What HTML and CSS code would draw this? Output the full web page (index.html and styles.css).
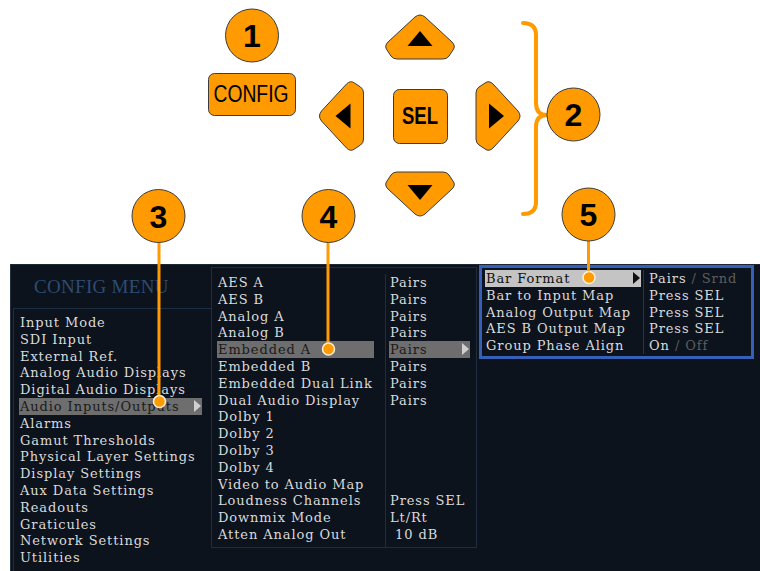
FILE: index.html
```html
<!DOCTYPE html>
<html lang="en">
<head>
    <meta charset="UTF-8">
    <meta name="viewport" content="width=device-width, initial-scale=1.0">
    <title>Config Menu - Audio Inputs/Outputs</title>
    <link rel="stylesheet" href="styles.css">
</head>
<body>

    <!-- front panel keys -->
    <div class="keypad">
        <svg width="760" height="264" viewBox="0 0 760 264">
            <defs>
                <path id="arrowKey" d="M-5,-20 Q0,-24 5,-20 L32,5 Q36,9 33,13 L29,19 Q27,22 23,22 L-23,22 Q-27,22 -29,19 L-33,13 Q-36,9 -32,5 Z"/>
                <path id="arrowMark" d="M0,-6 L12.5,9 L-12.5,9 Z"/>
            </defs>

            <rect class="key" x="208.5" y="73.5" width="87" height="42" rx="6"/>
            <text class="key-text" x="251" y="102" textLength="75" lengthAdjust="spacingAndGlyphs">CONFIG</text>

            <g transform="translate(420 37)"><use class="key" href="#arrowKey"/><use class="mark" href="#arrowMark"/></g>
            <g transform="translate(420 194) rotate(180)"><use class="key" href="#arrowKey"/><use class="mark" href="#arrowMark"/></g>
            <g transform="translate(341.5 116) rotate(-90)"><use class="key" href="#arrowKey"/><use class="mark" href="#arrowMark"/></g>
            <g transform="translate(498 116) rotate(90)"><use class="key" href="#arrowKey"/><use class="mark" href="#arrowMark"/></g>

            <rect class="key" x="393.5" y="89.5" width="54" height="54" rx="6"/>
            <text class="key-text bold" x="420" y="124" textLength="36" lengthAdjust="spacingAndGlyphs">SEL</text>

            <path class="brace" d="M523,23 Q536,23 536,35 L536,103 Q536,115 547,115 Q536,115 536,127 L536,202 Q536,214 523,214"/>
        </svg>
    </div>

    <!-- instrument screen -->
    <div class="screen">
        <div class="nav">
            <div class="nav-title">CONFIG MENU</div>
            <ul class="nav-list">
                <li>Input Mode</li>
                <li>SDI Input</li>
                <li>External Ref.</li>
                <li>Analog Audio Displays</li>
                <li>Digital Audio Displays</li>
                <li class="active">Audio Inputs/Outputs</li>
                <li>Alarms</li>
                <li>Gamut Thresholds</li>
                <li>Physical Layer Settings</li>
                <li>Display Settings</li>
                <li>Aux Data Settings</li>
                <li>Readouts</li>
                <li>Graticules</li>
                <li>Network Settings</li>
                <li>Utilities</li>
            </ul>
        </div>

        <div class="submenu">
            <ul class="labels">
                <li>AES A</li>
                <li>AES B</li>
                <li>Analog A</li>
                <li>Analog B</li>
                <li class="active">Embedded A</li>
                <li>Embedded B</li>
                <li>Embedded Dual Link</li>
                <li>Dual Audio Display</li>
                <li>Dolby 1</li>
                <li>Dolby 2</li>
                <li>Dolby 3</li>
                <li>Dolby 4</li>
                <li>Video to Audio Map</li>
                <li>Loudness Channels</li>
                <li>Downmix Mode</li>
                <li>Atten Analog Out</li>
            </ul>
            <ul class="values">
                <li>Pairs</li>
                <li>Pairs</li>
                <li>Pairs</li>
                <li>Pairs</li>
                <li class="active">Pairs</li>
                <li>Pairs</li>
                <li>Pairs</li>
                <li>Pairs</li>
                <li></li>
                <li></li>
                <li></li>
                <li></li>
                <li></li>
                <li>Press SEL</li>
                <li>Lt/Rt</li>
                <li>&nbsp;10 dB</li>
            </ul>
        </div>

        <div class="detail">
            <ul class="labels">
                <li class="active">Bar Format</li>
                <li>Bar to Input Map</li>
                <li>Analog Output Map</li>
                <li>AES B Output Map</li>
                <li>Group Phase Align</li>
            </ul>
            <ul class="values">
                <li>Pairs <span class="dim">/ Srnd</span></li>
                <li>Press SEL</li>
                <li>Press SEL</li>
                <li>Press SEL</li>
                <li>On <span class="dim">/ Off</span></li>
            </ul>
        </div>
    </div>

    <!-- numbered callouts -->
    <svg class="callouts" width="760" height="571" viewBox="0 0 760 571">
        <line class="lead" x1="159" y1="242" x2="159" y2="402"/>
        <line class="lead" x1="328" y1="242" x2="328" y2="349"/>
        <line class="lead" x1="588.5" y1="241" x2="588.5" y2="277"/>
        <circle class="dot" cx="159.5" cy="401.5" r="6"/>
        <circle class="dot" cx="328.5" cy="349" r="6"/>
        <circle class="dot" cx="589" cy="277.5" r="6"/>

        <circle class="badge" cx="252" cy="35.5" r="26.5"/>
        <text class="badge-num" x="252" y="47">1</text>
        <circle class="badge" cx="573.5" cy="114.5" r="26.5"/>
        <text class="badge-num" x="573.5" y="126">2</text>
        <circle class="badge" cx="158.5" cy="216" r="26.5"/>
        <text class="badge-num" x="158.5" y="227.5">3</text>
        <circle class="badge" cx="328.5" cy="216" r="26.5"/>
        <text class="badge-num" x="328.5" y="227.5">4</text>
        <circle class="badge" cx="588.5" cy="214.5" r="26.5"/>
        <text class="badge-num" x="588.5" y="226">5</text>
    </svg>

</body>
</html>
```

FILE: styles.css
```css
body { margin: 0; width: 760px; height: 571px; position: relative; overflow: hidden; background-color: #fff; font-family: "DejaVu Serif", serif; }
ul { list-style: none; margin: 0; padding: 0; }

/* keys */
.keypad { height: 264px; }
.keypad svg { display: block; }
.key { fill: #ff9a00; stroke: #3c3c3c; stroke-width: 1; }
.mark { fill: #000; }
.key-text { font-family: "Liberation Sans", Arial, sans-serif; font-size: 23px; fill: #000; text-anchor: middle; }
.key-text.bold { font-weight: bold; }
.brace { fill: none; stroke: #ff9a00; stroke-width: 4; stroke-linecap: round; }

/* screen */
.screen { display: flex; align-items: flex-start; height: 307px; margin-left: 10px; box-sizing: border-box; background-color: #0c131d; border-top: 1px solid #1c2734; border-left: 1px solid #243140; font-size: 13px; line-height: 17px; letter-spacing: 0.9px; color: #dadada; }
.screen li { position: relative; white-space: nowrap; height: 16.8px; }
.screen li.active { background-color: #6e6e6e; color: #1a1a1a; }
.nav-list li.active::after, .values li.active::after, .detail .labels li.active::after { content: ""; position: absolute; right: 1px; top: 2px; border-left: 7px solid #d0d0d0; border-top: 6px solid transparent; border-bottom: 6px solid transparent; }

.nav { width: 200px; flex: none; }
.nav-title { height: 43px; line-height: 43px; padding-left: 23px; font-family: "Liberation Serif", serif; font-size: 19px; letter-spacing: 0.3px; color: #2d4c72; }
.nav-list { margin-left: 2px; padding: 5px 9px 0 5px; border-top: 1px solid #1d2d42; border-left: 1px solid #1d2d42; height: 258px; }
.nav-list li { padding-left: 1px; }

.submenu { display: flex; flex: none; width: 266px; height: 281px; margin-top: 2px; box-sizing: border-box; padding: 6px 0 0 5px; border: 1px solid #1d2d42; }
.submenu .labels { width: 157px; }
.submenu .labels li { padding-left: 1px; }
.submenu .values { width: 81px; margin-left: 11px; padding-left: 3px; border-left: 1px solid #1d2d42; }
.submenu .values li { padding-left: 1px; }

.detail { display: flex; flex: none; width: 275px; margin-left: 2px; box-sizing: border-box; padding: 2px 0 2px 3px; border: 3px solid #3660b8; }
.detail .labels { width: 156px; }
.detail .labels li { padding-left: 1px; }
.detail .labels li.active { background-color: #c4c4c4; color: #111; }
.detail .labels li.active::after { border-left-color: #111; }
.detail .values { margin-left: 2px; padding-left: 5px; border-left: 1px solid #26354a; }
.detail li { line-height: 18px; }
.dim { color: #5e5e5e; }

/* callouts */
.callouts { position: absolute; top: 0; left: 0; pointer-events: none; }
.lead { stroke: #ff9a00; stroke-width: 3; }
.dot { fill: #ff9a00; stroke: #fff0d8; stroke-width: 1.5; }
.badge { fill: #ff9a00; stroke: #3c3c3c; stroke-width: 1; }
.badge-num { font-family: "Liberation Sans", Arial, sans-serif; font-weight: bold; font-size: 32px; fill: #000; text-anchor: middle; }
```
